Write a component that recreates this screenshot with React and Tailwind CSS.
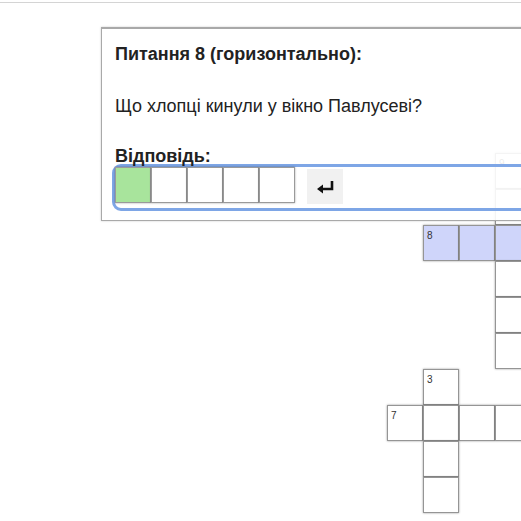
import React from "react";

const CELL = "border border-[#959595] shadow-[0_0_2px_rgba(0,0,0,0.4)] text-[10px] leading-none text-[#333] pl-[3px] pt-[5px]";
const SLOT = "w-9 h-9 border border-[#9a9a9a] shadow-[0_0_2px_rgba(0,0,0,0.35)]";

const cells = [
  { c: "col-start-4 row-start-1", n: "9", bg: "bg-white" },
  { c: "col-start-4 row-start-2", bg: "bg-white" },
  { c: "col-start-2 row-start-3", n: "8", bg: "bg-[#cfd5fa]" },
  { c: "col-start-3 row-start-3", bg: "bg-[#cfd5fa]" },
  { c: "col-start-4 row-start-3", bg: "bg-[#cfd5fa]" },
  { c: "col-start-4 row-start-4", bg: "bg-white" },
  { c: "col-start-4 row-start-5", bg: "bg-white" },
  { c: "col-start-4 row-start-6", bg: "bg-white" },
  { c: "col-start-2 row-start-7", n: "3", bg: "bg-white" },
  { c: "col-start-1 row-start-8", n: "7", bg: "bg-white" },
  { c: "col-start-2 row-start-8", bg: "bg-white" },
  { c: "col-start-3 row-start-8", bg: "bg-white" },
  { c: "col-start-4 row-start-8", bg: "bg-white" },
  { c: "col-start-2 row-start-9", bg: "bg-white" },
  { c: "col-start-2 row-start-10", bg: "bg-white" },
];

function ReturnIcon() {
  return (
    <svg width="20" height="14" viewBox="0 0 20 14">
      <path d="M17 1 V9 H7" fill="none" stroke="#111" strokeWidth="2.6" />
      <polygon points="2,9 8,4.5 8,13.5" fill="#111" />
    </svg>
  );
}

export default function App() {
  return (
    <div
      className="relative w-[521px] h-[521px] overflow-hidden bg-white"
      style={{ fontFamily: '"Liberation Sans", Arial, sans-serif' }}
    >
      <div className="mt-[2px] h-px bg-[#d4d4d4]" />

      {/* crossword board */}
      <div className="ml-[387px] mt-[150px] grid grid-cols-[repeat(4,36px)] grid-rows-[repeat(10,36px)]">
        {cells.map((cell, i) => (
          <div key={i} className={`${cell.c} ${cell.bg} ${CELL}`}>
            {cell.n}
          </div>
        ))}
      </div>

      {/* question popup */}
      <div className="absolute left-[101px] top-[27px] w-[460px] h-[194px] bg-white/90 border border-[#a9a9a9] border-t-2 shadow-[0_0_2px_rgba(0,0,0,0.2)] pl-[13px] pt-[14px] text-[#222]">
        <div className="text-[18px] leading-[22px] font-bold">Питання 8 (горизонтально):</div>
        <div className="mt-[30px] text-[18px] leading-[22px]">Що хлопці кинули у вікно Павлусеві?</div>
        <div className="mt-[28px] text-[18px] leading-[22px] font-bold">Відповідь:</div>
        <div className="-ml-[3px] -mt-[3px] w-[420px] h-[47px] rounded-[9px] border-[3px] border-[#7ea6e6] flex items-start">
          <div className="flex">
            <div className={`${SLOT} bg-[#a8e49c]`} />
            <div className={`${SLOT} bg-white`} />
            <div className={`${SLOT} bg-white`} />
            <div className={`${SLOT} bg-white`} />
            <div className={`${SLOT} bg-white`} />
          </div>
          <div className="ml-[12px] mt-[2px] w-9 h-[35px] bg-[#f1f1f1] flex items-center justify-center">
            <ReturnIcon />
          </div>
        </div>
      </div>
    </div>
  );
}
